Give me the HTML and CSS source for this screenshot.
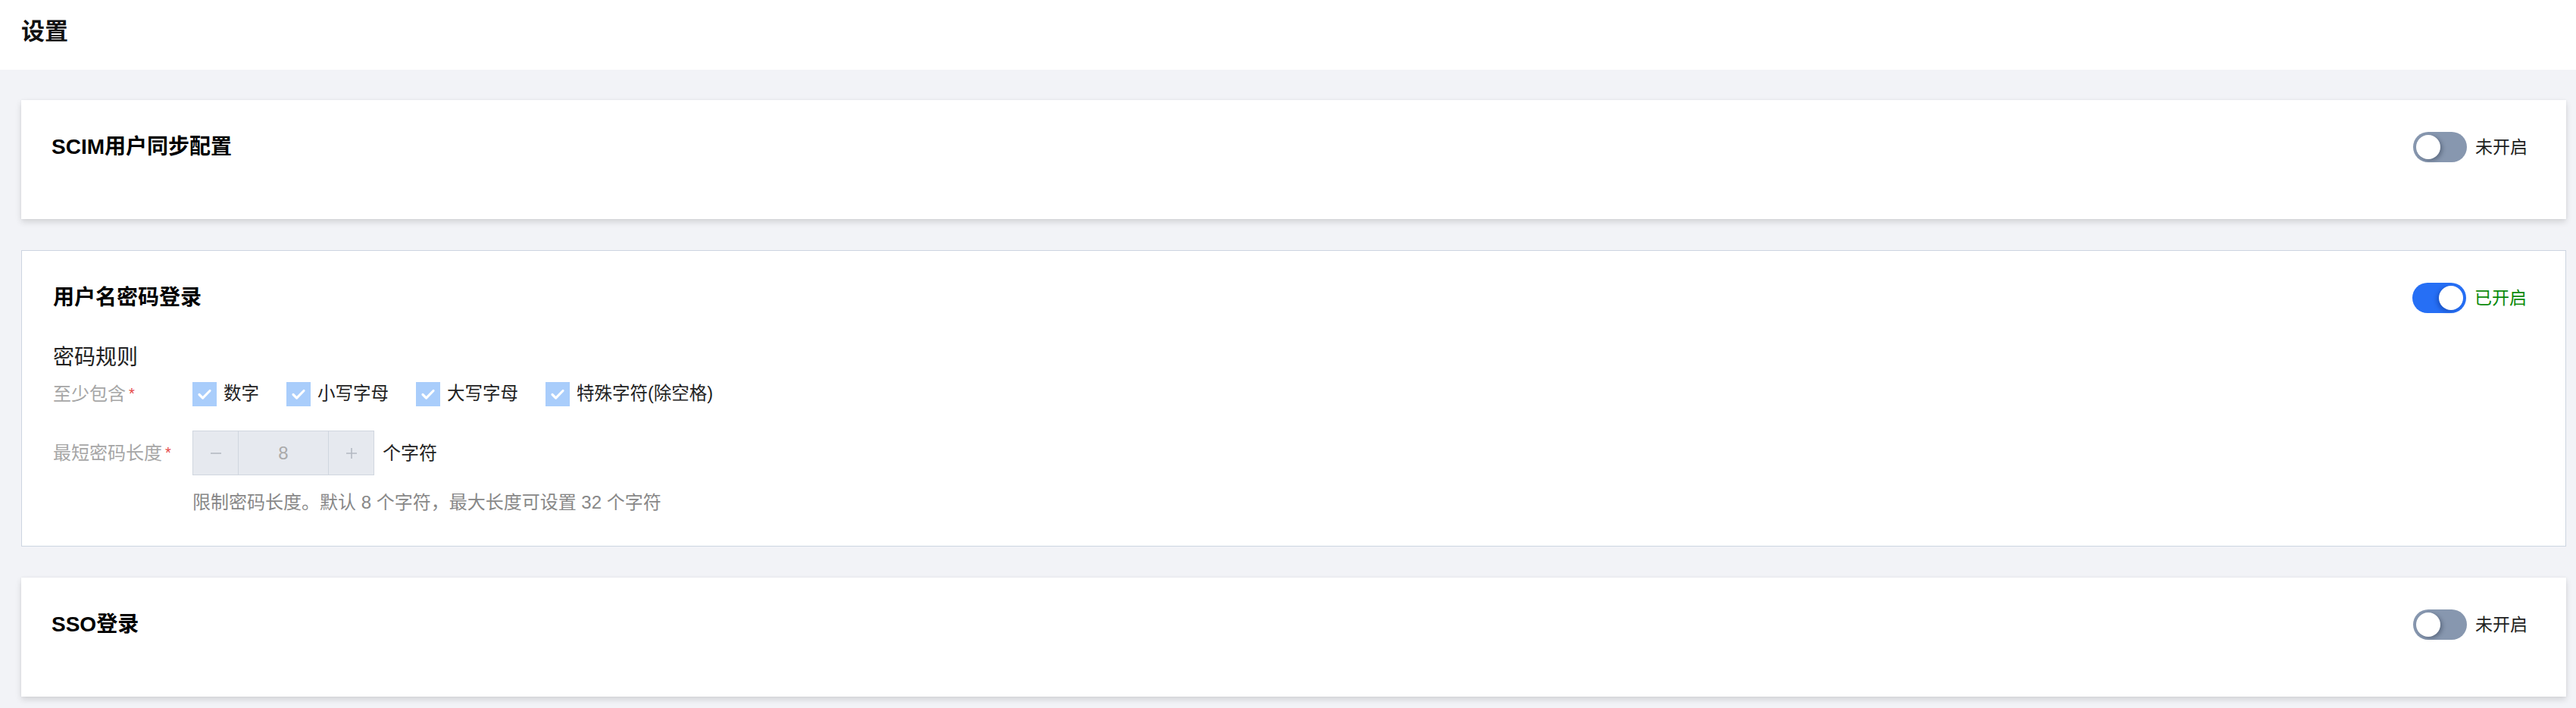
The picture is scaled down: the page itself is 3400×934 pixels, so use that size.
FILE: index.html
```html
<!DOCTYPE html>
<html lang="zh-CN">
<head>
<meta charset="utf-8">
<title>设置</title>
<link rel="stylesheet" href="styles.css">
</head>
<body>
<header class="page-header">
  <h1 class="page-title">设置</h1>
</header>
<main class="content">
  <section class="card card-shadow">
    <div class="card-head">
      <h2 class="card-title">SCIM用户同步配置</h2>
      <div class="switch-wrap">
        <span class="switch"><span class="knob"></span></span>
        <span class="switch-text">未开启</span>
      </div>
    </div>
  </section>

  <section class="card card-bordered">
    <div class="card-head">
      <h2 class="card-title">用户名密码登录</h2>
      <div class="switch-wrap">
        <span class="switch is-on"><span class="knob"></span></span>
        <span class="switch-text is-on">已开启</span>
      </div>
    </div>
    <div class="card-body">
      <div class="section-title">密码规则</div>
      <div class="form-row row-check">
        <div class="form-label">至少包含<span class="req">*</span></div>
        <div class="checks">
          <label class="check"><span class="box"><svg viewBox="0 0 32 32" width="32" height="32"><path d="M9 16.5l4.6 4.6L23 11.5" fill="none" stroke="#fff" stroke-width="3.2" stroke-linecap="round" stroke-linejoin="round"/></svg></span><span>数字</span></label>
          <label class="check"><span class="box"><svg viewBox="0 0 32 32" width="32" height="32"><path d="M9 16.5l4.6 4.6L23 11.5" fill="none" stroke="#fff" stroke-width="3.2" stroke-linecap="round" stroke-linejoin="round"/></svg></span><span>小写字母</span></label>
          <label class="check"><span class="box"><svg viewBox="0 0 32 32" width="32" height="32"><path d="M9 16.5l4.6 4.6L23 11.5" fill="none" stroke="#fff" stroke-width="3.2" stroke-linecap="round" stroke-linejoin="round"/></svg></span><span>大写字母</span></label>
          <label class="check"><span class="box"><svg viewBox="0 0 32 32" width="32" height="32"><path d="M9 16.5l4.6 4.6L23 11.5" fill="none" stroke="#fff" stroke-width="3.2" stroke-linecap="round" stroke-linejoin="round"/></svg></span><span>特殊字符(除空格)</span></label>
        </div>
      </div>
      <div class="form-row row-num">
        <div class="form-label">最短密码长度<span class="req">*</span></div>
        <div class="num-wrap">
          <div class="stepper">
            <span class="step">
              <svg viewBox="0 0 20 20" width="20" height="20"><path d="M3 10h14" stroke="#b4b9c2" stroke-width="1.6"/></svg>
            </span>
            <span class="step-val">8</span>
            <span class="step">
              <svg viewBox="0 0 20 20" width="20" height="20"><path d="M3 10h14M10 3v14" stroke="#b4b9c2" stroke-width="1.6"/></svg>
            </span>
          </div>
          <span class="unit">个字符</span>
        </div>
      </div>
      <div class="hint">限制密码长度。默认 8 个字符，最大长度可设置 32 个字符</div>
    </div>
  </section>

  <section class="card card-shadow">
    <div class="card-head">
      <h2 class="card-title">SSO登录</h2>
      <div class="switch-wrap">
        <span class="switch"><span class="knob"></span></span>
        <span class="switch-text">未开启</span>
      </div>
    </div>
  </section>
</main>
</body>
</html>
```
FILE: styles.css
```css
* { box-sizing: border-box; }
html, body {
  margin: 0;
  padding: 0;
}
body {
  background: #f2f3f7;
  font-family: "Liberation Sans", "Noto Sans CJK SC", sans-serif;
  color: #222;
  height: 934px;
  overflow: hidden;
}
.page-header {
  height: 92px;
  background: #fff;
  display: flex;
  align-items: center;
  padding-left: 28px;
}
.page-title {
  margin: 0;
  font-size: 31px;
  font-weight: 700;
  color: #111;
  line-height: 1;
  margin-top: -10px;
}
.content {
  padding: 40px 13px 0 28px;
  display: flex;
  flex-direction: column;
  gap: 41px;
}
.card {
  background: #fff;
}
.card-shadow {
  height: 157px;
  padding: 40px 51px 0 40px;
  box-shadow: 0 4px 8px rgba(0, 0, 0, 0.13), 0 0 3px rgba(0, 0, 0, 0.05);
}
.card-bordered {
  height: 391px;
  border: 1px solid #cdd5e1;
  padding: 40px 51px 0 41px;
}
.card-head {
  height: 44px;
  display: flex;
  align-items: center;
  justify-content: space-between;
}
.card-title {
  margin: 0;
  font-size: 28px;
  font-weight: 700;
  color: #000;
  line-height: 1;
}
.switch-wrap {
  display: flex;
  align-items: center;
  gap: 11px;
}
.switch {
  width: 71px;
  height: 40px;
  border-radius: 20px;
  background: #8797af;
  display: flex;
  align-items: center;
  padding: 0 4px;
}
.switch .knob {
  width: 32px;
  height: 32px;
  border-radius: 50%;
  background: #fff;
  box-shadow: 3px 2px 5px rgba(30, 40, 60, 0.35);
}
.switch.is-on {
  background: #266ff5;
  justify-content: flex-end;
}
.switch.is-on .knob {
  box-shadow: -3px 2px 5px rgba(10, 40, 120, 0.35);
}
.switch-text {
  font-size: 23px;
  color: #222;
  line-height: 1;
}
.switch-text.is-on {
  color: #0a8a0a;
}
.card-body {
  display: flex;
  flex-direction: column;
}
.section-title {
  margin-top: 39px;
  font-size: 28px;
  line-height: 36px;
  color: #222;
}
.form-row {
  display: flex;
  align-items: center;
}
.row-check {
  margin-top: 14px;
  height: 32px;
}
.row-num {
  margin-top: 32px;
  height: 59px;
}
.form-label {
  width: 184px;
  font-size: 24px;
  color: #a6a6a6;
  line-height: 1;
  white-space: nowrap;
}
.req {
  color: #e54545;
  font-size: 20px;
  margin-left: 4px;
  vertical-align: 2px;
}
.checks {
  display: flex;
  align-items: center;
  gap: 36px;
}
.check {
  display: flex;
  align-items: center;
  gap: 9px;
  font-size: 23.5px;
  color: #222;
  line-height: 1;
}
.box {
  width: 32px;
  height: 32px;
  background: #a9cdfb;
  display: block;
}
.box svg { display: block; }
.num-wrap {
  display: flex;
  align-items: center;
  gap: 11px;
}
.stepper {
  display: flex;
  height: 59px;
  width: 240px;
  border: 1px solid #d0d6df;
  background: #e6e9ef;
}
.step {
  width: 59px;
  display: flex;
  align-items: center;
  justify-content: center;
}
.step svg { display: block; }
.step-val {
  flex: 1;
  display: flex;
  align-items: center;
  justify-content: center;
  border-left: 1px solid #d0d6df;
  border-right: 1px solid #d0d6df;
  font-size: 24px;
  color: #aaa;
}
.unit {
  font-size: 24px;
  color: #222;
  line-height: 1;
}
.hint {
  margin-top: 20px;
  margin-left: 184px;
  font-size: 24px;
  line-height: 32px;
  color: #888;
}
```
